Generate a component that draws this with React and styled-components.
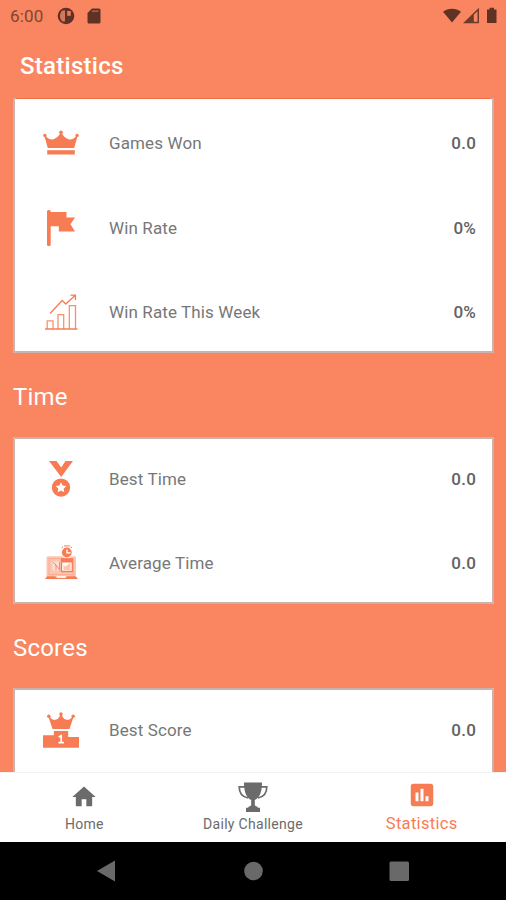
import React from 'react'
import styled, { createGlobalStyle } from 'styled-components'

const accent = '#F87C53'

const GlobalStyle = createGlobalStyle`
    * {
        box-sizing: border-box;
    }
    body {
        margin: 0;
        overflow: hidden;
        font-family: Roboto, 'Liberation Sans', sans-serif;
    }
`

const CrownIcon = () => (
    <svg width="36" height="36" viewBox="0 0 36 36" fill={accent}>
        <path d="M4.8 23 1.4 11 2.4 10.4C4.5 13.500 7.500 15 10.500 14.300 14 13 16.500 10.500 17.200 7.500h1.600C19.500 10.500 22 13 25.500 14.300 28.500 15 31.500 13.500 33.600 10.400l1 .6L31.200 23z" />
        <circle cx="1.900" cy="10.400" r="1.700" />
        <circle cx="18" cy="7.300" r="1.800" />
        <circle cx="34.100" cy="10.400" r="1.700" />
        <rect x="4.200" y="25.200" width="27.600" height="4.300" />
    </svg>
)

const FlagIcon = () => (
    <svg width="36" height="36" viewBox="0 0 36 36" fill={accent}>
        <rect x="4" y="0" width="3.700" height="36" rx="1.600" />
        <path d="M7 2h16.500v5.500H32l-4.500 6.800 4.500 7.200H15.800V16.200H7z" />
    </svg>
)

const GrowthIcon = () => (
    <svg width="36" height="36" viewBox="0 0 36 36" fill="none" stroke={accent} strokeWidth="1.3">
        <path d="M2 35H34.5" />
        <path d="M4.200 35V26.900H10V35M15 35V20.600H20.700V35M26.300 35V11.700H32.500V35" opacity=".85" />
        <path d="M7 19.500 19.200 6.500 22.800 10 32 1.500M27.500 1.200H32.400V6" />
    </svg>
)

const MedalIcon = () => (
    <svg width="36" height="36" viewBox="0 0 36 36" fill={accent}>
        <path d="M6 0h7.500l4.700 6.400L22.500 0H30L18.200 16z" />
        <path
            fillRule="evenodd"
            d="M18 17.400a9.200 9.200 0 1 0 0 18.400 9.200 9.200 0 1 0 0-18.400zM18 21.300l1.600 3.300 3.700.5-2.700 2.600.7 3.600-3.300-1.700-3.300 1.700.7-3.600-2.700-2.600 3.700-.5z"
        />
    </svg>
)

const AverageIcon = () => (
    <svg width="36" height="36" viewBox="0 0 36 36" fill={accent}>
        <rect x="3.500" y="11.300" width="29.500" height="20.500" rx="1.500" opacity=".45" />
        <path d="M6 13.500h24.500v16H6z" fill="none" stroke={accent} opacity=".3" />
        <path d="M9.500 16.500h7.500v9H9.500z" fill="#fff" opacity=".45" />
        <path d="M10 17l3 3v5M12 19l4 5M16.500 17v8.500" fill="none" stroke={accent} opacity=".8" />
        <path d="M18.500 14h10.800v12.500H18.500z" fill="#fff" stroke={accent} strokeWidth="1.3" />
        <path d="M20.500 25v-5l2 1.500 5-4V25z" opacity=".45" />
        <path d="M18.500 14h10.800v3.600H18.500z" />
        <circle cx="23.800" cy="7.300" r="5.800" fill="#fff" />
        <circle cx="23.800" cy="7.500" r="4.900" />
        <path d="M24 4.500v3.400h3.600" fill="none" stroke="#fff" strokeWidth="1.4" />
        <path d="M21 .9h5.600M18.600 3l1.600-1.200M29 3l-1.600-1.200" stroke={accent} />
        <path d="M2 34 4 31.300h8l2 1.400h8l2-1.400h8.800l2 2.700z" />
        <path d="M14 31h9v1.700h-9z" fill="#fff" opacity=".7" />
    </svg>
)

const PodiumIcon = () => (
    <svg width="36" height="36" viewBox="0 0 36 36" fill={accent}>
        <path d="M9.500 16.900 5.500 5l1-.5c2 3 3.800 3.700 6.200 3.200C15.500 7 16.700 5 17.300 2h1.400c.6 3 1.800 5 4.600 5.700 2.400.5 4.200-.2 6.200-3.200l1 .5-4 11.900z" />
        <circle cx="5.800" cy="4.300" r="1.700" />
        <circle cx="18" cy="1.900" r="1.700" />
        <circle cx="30.200" cy="4.300" r="1.700" />
        <path d="M0 23.200h10.800v-4.200h14.400v6H36V35.700H0z" />
        <path d="M15.600 24.900 18.200 23.700v7M15.500 30.700h5.400" fill="none" stroke="#fff" strokeWidth="1.700" />
    </svg>
)

const sections = [
    {
        height: 255,
        rows: [
            { icon: <CrownIcon />, label: 'Games Won', value: '0.0' },
            { icon: <FlagIcon />, label: 'Win Rate', value: '0%' },
            { icon: <GrowthIcon />, label: 'Win Rate This Week', value: '0%' },
        ],
    },
    {
        title: 'Time',
        height: 167.5,
        rows: [
            { icon: <MedalIcon />, label: 'Best Time', value: '0.0' },
            { icon: <AverageIcon />, label: 'Average Time', value: '0.0' },
        ],
    },
    {
        title: 'Scores',
        height: 168,
        rows: [
            { icon: <PodiumIcon />, label: 'Best Score', value: '0.0' },
        ],
    },
]

function StatusBar() {
    return (
        <StatusBarStyled>
            <span>6:00</span>
            <svg width="18" height="18" viewBox="0 0 18 18">
                <circle cx="9" cy="9" r="8.300" fill="#5F3225" />
                <path d="M8 3.500H5.500C3.800 4.800 3 6.800 3 9s.8 4.200 2.500 5.500H8z" fill="#D5775A" />
                <path d="M10.200 4H13.800V8.800H10.200z" fill="#E87C59" />
            </svg>
            <svg className="sd" width="14" height="16" viewBox="0 0 14 16">
                <path d="M5 .5h7a1.500 1.500 0 0 1 1.500 1.500v12a1.500 1.500 0 0 1-1.500 1.500H2A1.500 1.500 0 0 1 .5 14V5z" fill="#5F3225" />
                <path d="M5 3.200H11.500" stroke="#B5654A" strokeWidth="1.400" />
            </svg>
            <svg className="system" width="56" height="18" viewBox="0 0 56 18" fill="#5F3225">
                <path d="M1 4.800C6 .7 14 .7 19 4.800L10 15.500z" />
                <path d="M21 16.300 37 .8V16.300z" opacity=".9" />
                <path d="M31.800 7.800 35.500 4.200V14.800H31.800z" fill="#F98660" />
                <path d="M45 2.500h2.500V.8h4.500v1.700H54.500V16H45z" />
            </svg>
        </StatusBarStyled>
    )
}

function StatCard({ rows, height, first }) {
    return (
        <CardStyled $first={first} $height={height}>
            {rows.map(row => (
                <RowStyled key={row.label}>
                    {row.icon}
                    <span className="label">{row.label}</span>
                    <span className="value">{row.value}</span>
                </RowStyled>
            ))}
        </CardStyled>
    )
}

function TabBar() {
    return (
        <TabBarStyled>
            <TabStyled>
                <svg width="28" height="28" viewBox="0 0 24 24" fill="currentColor">
                    <path d="M10 20v-6h4v6h5v-8h3L12 3 2 12h3v8z" />
                </svg>
                <span>Home</span>
            </TabStyled>
            <TabStyled>
                <svg width="32" height="32" viewBox="0 0 32 32" fill="currentColor">
                    <path d="M7 1.500h18c0 9-2 15-7.200 17.500V24.500c1.500.8 2.700 1.200 3.200 2.200h2V31H9v-4.300h2c.5-1 1.700-1.400 3.200-2.200V19C9 16.500 7 10.500 7 1.500z" />
                    <path d="M8 5.800H2.200C2.200 12 5.500 16 11 17M24 5.800h5.800C29.800 12 26.500 16 21 17" fill="none" stroke="currentColor" strokeWidth="1.700" />
                </svg>
                <span>Daily Challenge</span>
            </TabStyled>
            <TabStyled $active>
                <svg width="30" height="30" viewBox="0 0 24 24" fill="currentColor">
                    <path d="M19 3H5c-1.100 0-2 .9-2 2v14c0 1.100.9 2 2 2h14c1.100 0 2-.9 2-2V5c0-1.100-.9-2-2-2zM9.200 17H6.800v-7h2.400v7zm4 0h-2.400V7h2.400v10zm4 0h-2.400v-4h2.400v4z" />
                </svg>
                <span>Statistics</span>
            </TabStyled>
        </TabBarStyled>
    )
}

function App() {
    return (
        <ScreenStyled>
            <GlobalStyle />
            <StatusBar />
            <HeaderStyled>Statistics</HeaderStyled>
            <ContentStyled>
                {sections.map((section, i) => (
                    <React.Fragment key={i}>
                        {section.title && <SectionTitle>{section.title}</SectionTitle>}
                        <StatCard rows={section.rows} height={section.height} first={i === 0} />
                    </React.Fragment>
                ))}
            </ContentStyled>
            <TabBar />
            <SystemNavStyled>
                <svg width="506" height="57" viewBox="0 0 506 57" fill="#696969">
                    <path d="M97 29 115 18.500V39.500z" />
                    <circle cx="253.500" cy="29" r="9.300" />
                    <rect x="389.500" y="19.500" width="19.500" height="19.500" rx="1.500" />
                </svg>
            </SystemNavStyled>
        </ScreenStyled>
    )
}

const ScreenStyled = styled.div`
    width: 506px;
    height: 900px;
    display: flex;
    flex-direction: column;
    overflow: hidden;
    background: #F98660;
`

const StatusBarStyled = styled.div`
    flex: none;
    height: 32px;
    display: flex;
    align-items: center;
    padding: 0 8px 0 10px;
    color: #824431;
    span{
        width: 47px;
        font-size: 17px;
        letter-spacing: 0.2px;
    }
    .sd{
        margin-left: 12px;
    }
    .system{
        margin-left: auto;
    }
`

const HeaderStyled = styled.h1`
    flex: none;
    height: 66px;
    margin: 0;
    padding-left: 20px;
    line-height: 68px;
    font-size: 24px;
    font-weight: 500;
    letter-spacing: 0.28px;
    color: #fff;
`

const ContentStyled = styled.div`
    flex: 1;
    min-height: 0;
    padding: 0 12px 0 13px;
    overflow: hidden;
`

const SectionTitle = styled.h2`
    margin: 0;
    height: 83.5px;
    line-height: 88px;
    font-size: 24px;
    font-weight: 400;
    letter-spacing: 0.2px;
    color: #fff;
`

const CardStyled = styled.div`
    height: ${props => props.$height}px;
    padding-top: ${props => props.$first ? '3px' : '0'};
    overflow: hidden;
    background: #fff;
    border-radius: 2px;
    box-shadow: inset 0 0 0 2px #C9B3AC;
    ${props => props.$first && `
        box-shadow: inset 2px 0 #C9B3AC, inset -2px 0 #C9B3AC, inset 0 -2px #C9B3AC, inset 0 1px #EE7048;
    `}
`

const RowStyled = styled.div`
    height: 84.6px;
    display: flex;
    align-items: center;
    padding: 0 18px 0 30px;
    svg{
        flex: none;
    }
    .label{
        margin-left: 30px;
        font-size: 17px;
        letter-spacing: 0.12px;
        color: #777;
    }
    .value{
        margin-left: auto;
        font-size: 17px;
        font-weight: 500;
        letter-spacing: 0.2px;
        color: #626262;
    }
`

const TabBarStyled = styled.nav`
    flex: none;
    height: 70px;
    display: grid;
    grid-template-columns: repeat(3, 1fr);
    background: #fff;
    border-top: 1px solid #F3F3F3;
`

const TabStyled = styled.div`
    display: flex;
    flex-direction: column;
    align-items: center;
    color: ${props => props.$active ? accent : '#6B6B6B'};
    svg{
        height: 32px;
        margin-top: ${props => props.$active ? '6px' : '8px'};
    }
    span{
        margin-top: ${props => props.$active ? '3px' : '1px'};
        font-size: ${props => props.$active ? '16.5px' : '14px'};
        line-height: 20px;
        letter-spacing: 0.3px;
    }
`

const SystemNavStyled = styled.div`
    flex: none;
    height: 58px;
    background: #000;
    svg{
        display: block;
    }
`

export default App
